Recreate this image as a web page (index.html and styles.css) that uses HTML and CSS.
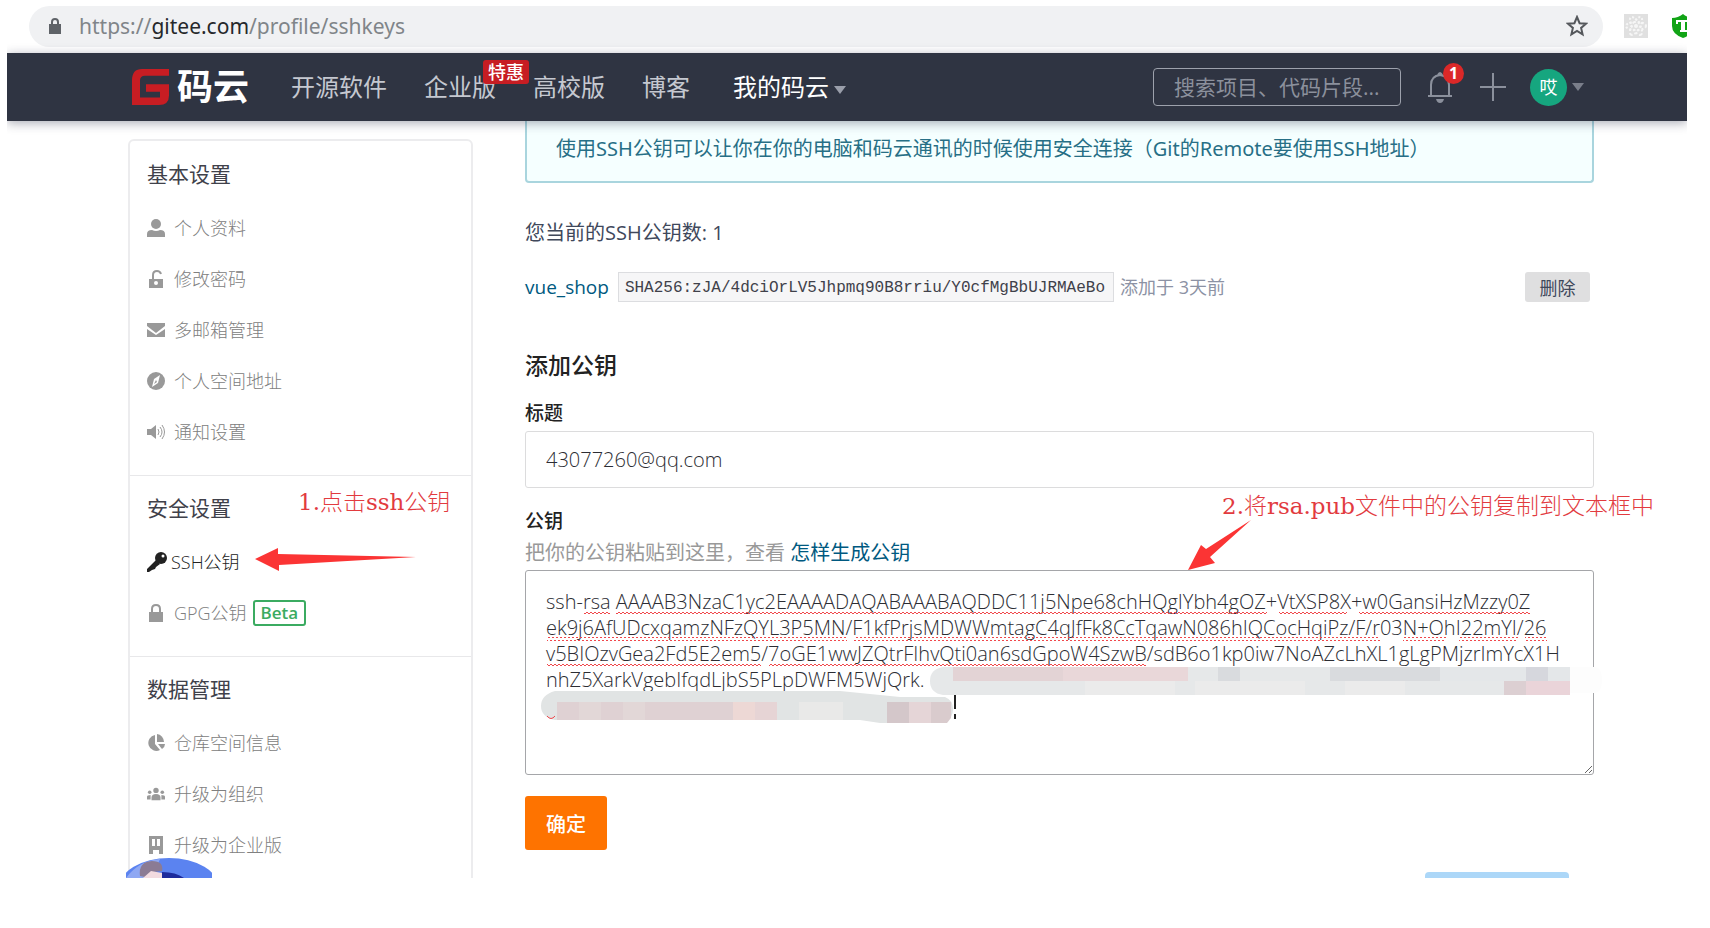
FILE: index.html
```html
<!DOCTYPE html>
<html lang="zh-CN">

<head>
    <meta charset="UTF-8">
    <meta name="viewport" content="width=device-width, initial-scale=1.0">
    <title>SSH公钥 - 码云</title>
    <link rel="stylesheet" href="styles.css">
</head>

<body>
    <div class="page">
        <!-- 地址栏 -->
        <div class="browser-bar">
            <div class="address">
                <svg class="lock" width="14" height="18" viewBox="0 0 14 18">
                    <path d="M1 7h12v10H1z" fill="#5f6368" />
                    <path d="M4 8V5a3 3 0 0 1 6 0v3" fill="none" stroke="#5f6368" stroke-width="2" />
                </svg>
                <span class="url">https://<b>gitee.com</b>/profile/sshkeys</span>
                <svg class="star" width="22" height="22" viewBox="0 0 22 22">
                    <path d="M11 2l2.600 6.200 6.400.5-4.900 4.200 1.500 6.500L11 16l-5.600 3.400 1.500-6.500L2 8.700l6.400-.5z" fill="none" stroke="#55585c" stroke-width="2" />
                </svg>
            </div>
            <svg class="ext" width="24" height="24" viewBox="0 0 24 24">
                <rect width="24" height="24" fill="#e0e0e0" />
                <g fill="none" stroke="#f6f6f6" stroke-width="2" stroke-dasharray="2 2">
                    <ellipse cx="12" cy="12" rx="10" ry="4" />
                    <ellipse cx="12" cy="12" rx="10" ry="4" transform="rotate(60 12 12)" />
                    <ellipse cx="12" cy="12" rx="10" ry="4" transform="rotate(120 12 12)" />
                </g>
                <circle cx="12" cy="12" r="2" fill="#f6f6f6" />
            </svg>
            <svg class="shield" width="15" height="24" viewBox="0 0 15 24">
                <path d="M0 4q6 0 11-4 5 4 11 4v8q0 8-11 12Q0 20 0 12z" fill="#11a416" />
                <path d="M4 6h14v4h-2V8h-3v8h2v2H8v-2h1V8H6v2H4z" fill="#fff" />
            </svg>
        </div>

        <header class="navbar">
            <a class="logo" href="#">
                <svg width="38" height="36" viewBox="0 0 38 38" preserveAspectRatio="none">
                    <path d="M10 0h27v7H13q-5 0-5 5v18h20v-6H14v-8h23v12q0 10-10 10H0V12Q0 0 10 0z" fill="#c71d23" />
                </svg>
                <span>码云</span>
            </a>
            <nav class="menu">
                <a href="#">开源软件</a>
                <a class="ent" href="#">企业版<em class="sale">特惠</em></a>
                <a href="#">高校版</a>
                <a href="#">博客</a>
                <a class="active" href="#">我的码云<i class="caret"></i></a>
            </nav>
            <div class="tools">
                <input class="search" type="text" aria-label="搜索" placeholder="搜索项目、代码片段...">
                <a class="bell" href="#" aria-label="通知">
                    <svg width="26" height="32" viewBox="0 0 26 32">
                        <path d="M1 25h24M4 25V14Q4 5 13 4q9 1 9 10v11M11 4q2-4 4 0" fill="none" stroke="#8b909c" stroke-width="2" />
                        <path d="M9 28h8q-1 4-4 4t-4-4z" fill="#8b909c" />
                    </svg>
                    <span class="count">1</span>
                </a>
                <a class="plus" href="#" aria-label="新建">
                    <svg width="26" height="28" viewBox="0 0 26 28">
                        <path d="M0 14h26M13 0v28" stroke="#8b909c" stroke-width="2" />
                    </svg>
                </a>
                <a class="user" href="#"><span class="avatar">哎</span><i class="caret"></i></a>
            </div>
        </header>

        <div class="content">
            <aside class="sidebar">
                <section>
                    <h4>基本设置</h4>
                    <a href="#">
                        <svg viewBox="0 0 18 18"><circle cx="9" cy="5" r="5" /><path d="M0 18v-3q0-4 5-4 4 2 8 0 5 0 5 4v3z" /></svg>
                        个人资料
                    </a>
                    <a href="#">
                        <svg viewBox="0 0 18 18"><path d="M2 9h14v9H2z" /><path d="M6 9V5q0-4 4-4 3 0 4 3" fill="none" stroke="#999" stroke-width="2" /><circle cx="9" cy="13" r="2" fill="#fff" /></svg>
                        修改密码
                    </a>
                    <a href="#">
                        <svg viewBox="0 0 18 18"><path d="M0 2h18v3l-9 7-9-7z" /><path d="M0 8l9 6 9-6v8H0z" /></svg>
                        多邮箱管理
                    </a>
                    <a href="#">
                        <svg viewBox="0 0 18 18"><circle cx="9" cy="9" r="9" /><path d="M13 3l-2 8-6 4 2-8z" fill="#fff" /><path d="M9 8l-2 4 3-2z" /></svg>
                        个人空间地址
                    </a>
                    <a href="#">
                        <svg viewBox="0 0 18 18"><path d="M0 6h4l5-4v14l-5-4H0z" /><path d="M11 6q2 3 0 6M13 4q4 5 0 10M15 2q5 7 0 14" fill="none" stroke="#999" /></svg>
                        通知设置
                    </a>
                </section>
                <section>
                    <h4>安全设置</h4>
                    <a class="current" href="#">
                        <svg viewBox="0 0 20 20"><circle cx="14" cy="6" r="6" /><path d="M9 8l4 4-4 3-1 2-3 1-3 2H0v-3z" /><circle cx="16" cy="4" r="1.500" fill="#fff" /></svg>
                        SSH公钥
                    </a>
                    <a href="#">
                        <svg viewBox="0 0 18 18"><path d="M2 8h14v10H2z" /><path d="M5 9V5q0-4 4-4t4 4v4" fill="none" stroke="#999" stroke-width="2" /></svg>
                        GPG公钥<span class="beta">Beta</span>
                    </a>
                </section>
                <section>
                    <h4>数据管理</h4>
                    <a href="#">
                        <svg viewBox="0 0 18 18"><path d="M8 1v9l5 6A8 8 0 1 1 8 1z" /><path d="M10 0a8 8 0 0 1 7 8h-7z" /><path d="M11 10h7q0 3-3 5z" /></svg>
                        仓库空间信息
                    </a>
                    <a href="#">
                        <svg viewBox="0 0 20 18"><circle cx="10" cy="5" r="3" /><circle cx="3" cy="7" r="2" /><circle cx="17" cy="7" r="2" /><path d="M5 16v-3q0-4 5-4t5 4v3zM0 15v-3q0-2 4-2v5zM20 15v-3q0-2-4-2v5z" /></svg>
                        升级为组织
                    </a>
                    <a href="#">
                        <svg viewBox="0 0 18 18"><path d="M2 0h14v18h-4v-4H6v4H2zM5 3v7h3V3zM10 3v7h3V3z" fill-rule="evenodd" /></svg>
                        升级为企业版
                    </a>
                </section>
            </aside>

            <main class="main">
                <div class="alert">使用SSH公钥可以让你在你的电脑和码云通讯的时候使用安全连接（Git的Remote要使用SSH地址）</div>
                <p class="total">您当前的SSH公钥数: 1</p>
                <div class="key-row">
                    <a href="#">vue_shop</a>
                    <code>SHA256:zJA/4dciOrLV5Jhpmq90B8rriu/Y0cfMgBbUJRMAeBo</code>
                    <span class="time">添加于 3天前</span>
                    <button class="btn-del" type="button">删除</button>
                </div>
                <form>
                    <h3>添加公钥</h3>
                    <label for="key-title">标题</label>
                    <input id="key-title" class="field" type="text" value="43077260@qq.com">
                    <label for="key-body" class="key-label">公钥</label>
                    <p class="help">把你的公钥粘贴到这里，查看 <a href="#">怎样生成公钥</a></p>
                    <div class="key-field">
                        <textarea id="key-body" class="field" spellcheck="false">ssh-rsa AAAAB3NzaC1yc2EAAAADAQABAAABAQDDC11j5Npe68chHQgIYbh4gOZ+VtXSP8X+w0GansiHzMzzy0Z
ek9j6AfUDcxqamzNFzQYL3P5MN/F1kfPrjsMDWWmtagC4qJfFk8CcTqawN086hIQCocHqiPz/F/r03N+OhI22mYI/26
v5BIOzvGea2Fd5E2em5/7oGE1wwJZQtrFIhvQti0an6sdGpoW4SzwB/sdB6o1kp0iw7NoAZcLhXL1gLgPMjzrImYcX1H
nhZ5XarkVgebIfqdLjbS5PLpDWFM5WjQrk.</textarea>
                        <!-- 拼写波浪线和打码 -->
                        <svg class="marks" width="1080" height="206" viewBox="0 0 1080 206">
                            <defs>
                                <pattern id="wave" width="4" height="4" y="1" patternUnits="userSpaceOnUse">
                                    <path d="M0 3l2-2 2 2" fill="none" stroke="#f0474b" />
                                </pattern>
                            </defs>
                            <g fill="url(#wave)">
                                <path d="M59 41h26v4H59zM91 41h651v4H91zM754 41h68v4h-68zM834 41h171v4H834z" />
                                <path d="M22 67h300v4H22zM329 67h526v4H329zM878 67h43v4h-43zM934 67h59v4h-59zM1000 67h22v4h-22z" />
                                <path d="M22 93h214v4H22zM244 93h377v4H244z" />
                            </g>
                            <path d="M1045 97h24q8 0 8 13t-8 13h-24z" fill="#fdfdfd" />
                            <path d="M418 97h627v28H418q-13-2-13-14t13-14z" fill="#e6e8e9" />
                            <path d="M428 97h110v14H428z" fill="#e3d3d5" />
                            <path d="M538 97h125v14H538z" fill="#e9d7d9" />
                            <path d="M693 97h22v14h-22zM805 97h110v14H805z" fill="#d9dbde" />
                            <path d="M915 97h86v14h-86zM1023 97h22v14h-22z" fill="#e4e7e9" />
                            <path d="M1001 97h22v14h-22z" fill="#d6d7dd" />
                            <path d="M560 111h90v14h-90zM670 111h110v14H670zM820 111h60v14h-60z" fill="#ebebeb" />
                            <path d="M979 111h22v14h-22z" fill="#dccfd2" />
                            <path d="M1001 111h44v14h-44z" fill="#ead4d9" />
                            <path d="M30 121h285l60 6h45q8 3 8 12t-8 14h-65l-20-3H30q-14-3-14-14t14-15z" fill="#e1e4e4" />
                            <path d="M32 132h176v18H32z" fill="#dfd1d3" />
                            <path d="M54 132h22v18H54zM98 132h22v18H98z" fill="#e2d7d7" />
                            <path d="M208 132h22v18h-22z" fill="#edd8d5" />
                            <path d="M230 132h22v18h-22z" fill="#e6d4d5" />
                            <path d="M274 132h44v18h-44z" fill="#e9e9e8" />
                            <path d="M362 132h22v21h-22z" fill="#d4c7ca" />
                            <path d="M384 132h22v21h-22z" fill="#e5d5d7" />
                            <path d="M406 132h20v16l-4 5h-16z" fill="#d9cbcd" />
                            <path d="M22 146q4 5 8 0" fill="none" stroke="#f0474b" />
                            <path d="M430 125v14M430 144v5" stroke="#222" stroke-width="2" />
                        </svg>
                    </div>
                    <button class="btn-ok" type="submit">确定</button>
                </form>
            </main>
        </div>

        <!-- 标注 -->
        <div class="note note-1">1.点击ssh公钥</div>
        <svg class="arrow arrow-1" width="162" height="24" viewBox="0 0 162 24">
            <path d="M0 11L23 0v6l138 3-137 8v6z" fill="#fb3434" />
        </svg>
        <div class="note note-2">2.将rsa.pub文件中的公钥复制到文本框中</div>
        <svg class="arrow arrow-2" width="64" height="50" viewBox="0 0 64 50">
            <path d="M0 50L13 25l5 4L63 0 22 37l5 6z" fill="#fb3434" />
        </svg>

        <svg class="helper" width="86" height="20" viewBox="0 0 86 20">
            <ellipse cx="43" cy="30" rx="50" ry="30" fill="#5b83f0" />
            <path d="M0 20Q12 3 34 1l-8 19z" fill="#8fa8f3" />
            <path d="M36 20V14q14 0 22 6z" fill="#1c2a9c" />
            <path d="M14 18q-2-14 12-15 12 0 10 10l-8 1-4 6z" fill="#8b7b94" />
            <path d="M17 20l8-7 11 2v5z" fill="#f2dbe0" />
        </svg>
        <div class="feedback"></div>
    </div>
</body>

</html>
```
FILE: styles.css
```css
* {
    box-sizing: border-box;
}

body {
    margin: 0;
    background: #fff;
    color: #40485b;
    font-family: "Open Sans", "Noto Sans CJK SC", sans-serif;
    font-size: 20px;
    line-height: 30px;
}

a {
    color: #005980;
    text-decoration: none;
}

button,
input,
textarea {
    font-family: inherit;
    border-radius: 3px;
}

.page {
    position: relative;
    height: calc(100vh - 50px);
    margin: 0 23px 0 7px;
    overflow: hidden;
}

/* 地址栏 */
.browser-bar {
    display: flex;
    align-items: center;
    height: 53px;
    padding: 0 0 1px 22px;
}

.address {
    display: flex;
    flex: 1;
    align-items: center;
    height: 41px;
    padding: 0 15px 0 19px;
    border-radius: 21px;
    background: #f0f1f3;
}

.url {
    flex: 1;
    margin-left: 17px;
    color: #808589;
    font-family: "Noto Sans", sans-serif;
    font-size: 21px;
}

.url b {
    color: #26282b;
    font-weight: normal;
}

.ext {
    margin: 0 24px 0 21px;
}

/* 顶部导航 */
.navbar {
    position: relative;
    z-index: 1;
    display: flex;
    align-items: center;
    height: 68px;
    padding: 0 103px 0 125px;
    background: #2f3442;
    box-shadow: 0 2px 10px rgba(40, 45, 70, .4);
}

.logo {
    display: flex;
    align-items: center;
    gap: 7px;
    color: #fff;
    font-size: 36px;
    font-weight: bold;
}

.menu {
    display: flex;
    gap: 37px;
    margin-left: 42px;
}

.menu a {
    color: #c5c8d0;
    font-size: 24px;
    white-space: nowrap;
}

.menu .active {
    margin-left: 6px;
    color: #fff;
}

.ent {
    position: relative;
}

.sale {
    position: absolute;
    top: -12px;
    left: 59px;
    padding: 0 5px;
    border-radius: 3px;
    background: #c71d23;
    color: #fff;
    font-size: 18px;
    font-style: normal;
    font-weight: 500;
    line-height: 24px;
}

.caret {
    display: inline-block;
    margin-left: 5px;
    border: 6px solid transparent;
    border-top: 8px solid #9a9eaa;
    border-bottom: 0;
    vertical-align: 2px;
}

.tools {
    display: flex;
    align-items: center;
    margin-left: auto;
}

.search {
    width: 248px;
    height: 38px;
    padding: 0 20px;
    border: 1px solid #9da1ac;
    border-radius: 4px;
    background: transparent;
    color: #fff;
    font-size: 21px;
}

.search::placeholder {
    color: #8b909c;
    opacity: 1;
}

.bell {
    position: relative;
    height: 32px;
    margin-left: 26px;
}

.bell svg,
.plus svg {
    display: block;
}

.count {
    position: absolute;
    top: -8px;
    left: 16px;
    width: 21px;
    height: 21px;
    border-radius: 50%;
    background: #db2828;
    color: #fff;
    font-size: 16px;
    font-weight: bold;
    line-height: 21px;
    text-align: center;
}

.plus {
    margin: 0 24px 0 27px;
}

.user {
    display: flex;
    align-items: center;
}

.avatar {
    width: 37px;
    height: 37px;
    border-radius: 50%;
    background: #16a67f;
    color: #fff;
    font-size: 18px;
    line-height: 36px;
    text-align: center;
}

.user .caret {
    opacity: .7;
}

/* 内容区 */
.content {
    display: flex;
    align-items: flex-start;
    gap: 52px;
    padding: 0 93px 0 121px;
}

.sidebar {
    flex: 0 0 345px;
    margin-top: 18px;
    padding-top: 1px;
    border: 2px solid #ececee;
    border-radius: 6px;
}

.sidebar section {
    padding: 18px 17px 18px;
    border-bottom: 1px solid #e8e8ea;
}

.sidebar h4 {
    margin: 0 0 14px;
    color: #40414a;
    font-size: 21px;
    font-weight: normal;
    line-height: 28px;
}

.sidebar a {
    display: flex;
    align-items: center;
    height: 51px;
    color: #808080;
    font-size: 18px;
    font-weight: 300;
}

.sidebar svg {
    width: 18px;
    height: 18px;
    margin-right: 9px;
    fill: #999;
}

.sidebar .current {
    color: #222;
}

.sidebar .current svg {
    width: 20px;
    height: 20px;
    margin-right: 4px;
    fill: #222;
}

.beta {
    margin-left: 6px;
    padding: 0 6px;
    border: 2px solid #3bab61;
    border-radius: 3px;
    color: #3bab61;
    font-size: 17px;
    font-weight: 600;
    line-height: 22px;
}

.main {
    flex: 1;
    min-width: 0;
}

.alert {
    padding: 13px 29px 17px;
    border: 2px solid #a9d5de;
    border-top: 0;
    border-radius: 0 0 4px 4px;
    background: #f5ffff;
    color: #276f86;
    font-family: "Noto Sans", "Noto Sans CJK SC", sans-serif;
}

.total {
    margin: 35px 0 24px;
}

.key-row {
    display: flex;
    align-items: center;
    height: 30px;
    padding-right: 4px;
}

.key-row a {
    font-size: 19px;
}

.key-row code {
    margin: 0 6px 0 9px;
    padding: 3px 8px 0 6px;
    border: 1px solid #dcdde0;
    background: #f6f6f7;
    color: #40414a;
    font-family: "Liberation Mono", monospace;
    font-size: 16px;
    line-height: 25px;
}

.key-row .time {
    color: #8c92a4;
    font-size: 18px;
}

.btn-del {
    width: 65px;
    height: 30px;
    margin-left: auto;
    padding: 0;
    border: 0;
    background: #dfdfe0;
    color: #40485b;
    font-size: 18px;
}

h3 {
    margin: 47px 0 17px;
    color: #222;
    font-size: 23px;
    font-weight: 500;
    line-height: 32px;
}

label {
    display: block;
    color: #222;
    font-size: 19px;
    font-weight: 500;
    line-height: 30px;
}

.field {
    display: block;
    width: 100%;
    padding: 0 20px;
    border: 1px solid #dcdcdd;
    color: #2c2d33;
    font-size: 20px;
    font-weight: 300;
}

input.field {
    height: 57px;
    margin-top: 3px;
}

.key-label {
    margin-top: 18px;
}

.help {
    margin: 2px 0 2px;
    color: #999;
}

.key-field {
    position: relative;
}

textarea.field {
    height: 205px;
    padding: 18px 20px;
    border-color: #a5a6a9;
    line-height: 26px;
    white-space: pre;
    overflow: hidden;
    resize: both;
}

.marks {
    position: absolute;
    top: 0;
    left: 0;
    pointer-events: none;
}

.btn-ok {
    width: 82px;
    height: 54px;
    margin-top: 21px;
    padding: 0;
    border: 0;
    background: #fe7300;
    color: #fff;
    font-size: 20px;
    font-weight: 500;
}

/* 标注 */
.note {
    position: absolute;
    color: #e23b3f;
    font-family: "DejaVu Serif", "Noto Sans CJK SC", serif;
    font-size: 23px;
    font-weight: 300;
    white-space: nowrap;
}

.note-1 {
    top: 487px;
    left: 291px;
}

.note-2 {
    top: 491px;
    left: 1215px;
}

.arrow {
    position: absolute;
}

.arrow-1 {
    top: 548px;
    left: 248px;
}

.arrow-2 {
    top: 520px;
    left: 1181px;
}

.helper {
    position: absolute;
    bottom: 0;
    left: 119px;
}

.feedback {
    position: absolute;
    right: 118px;
    bottom: 0;
    width: 144px;
    height: 6px;
    border-radius: 4px 4px 0 0;
    background: #acd7f8;
}
```
